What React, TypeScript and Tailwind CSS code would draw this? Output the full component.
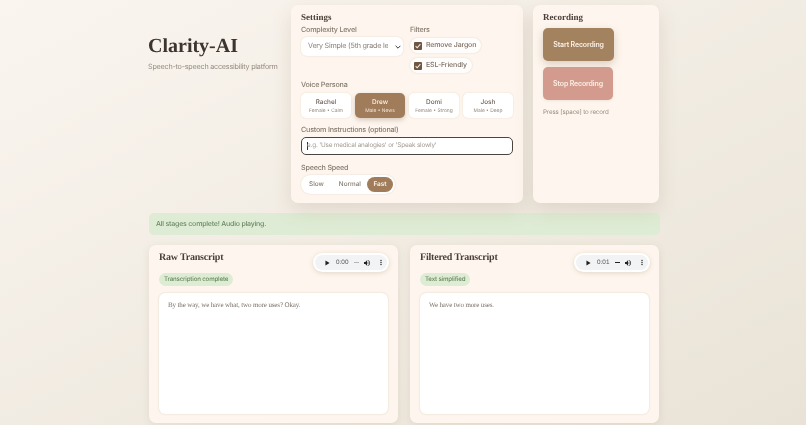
import React from "react";

const sans = "font-['Inter','Noto_Sans',sans-serif] [text-rendering:geometricPrecision]";
const serif = "font-['Liberation_Serif','DejaVu_Serif',serif]";
const label = "text-[7.2px] leading-[10px] tracking-[-0.03em] font-medium text-[#857a6e]";

function Persona({ name, sub, active }: { name: string; sub: string; active?: boolean }) {
  return (
    <div
      className={
        "flex h-[25px] w-[50px] flex-col items-center justify-center rounded-[5px] " +
        (active
          ? "bg-[#a07c5b] text-[#fbf3ea] shadow-[0_2px_5px_rgba(90,60,30,0.25)]"
          : "bg-white text-[#6b6057] shadow-[0_0_2px_rgba(120,90,60,0.18)]")
      }
    >
      <span className="text-[6.4px] leading-[10px] font-medium">{name}</span>
      <span className={"text-[4.9px] leading-[8px] " + (active ? "text-[#f3e6d8]" : "text-[#94887e]")}>{sub}</span>
    </div>
  );
}

function Check({ label }: { label: string }) {
  return (
    <div className="flex h-[15px] w-fit items-center gap-[4px] rounded-full bg-[#fffdfb] pr-[5px] pl-[4px] shadow-[0_0_2px_rgba(120,90,60,0.22)]">
      <span className="flex h-[8px] w-[8px] items-center justify-center rounded-[1px] bg-[#6f5641]">
        <svg viewBox="0 0 8 8" className="h-[8px] w-[8px]">
          <path d="M1.6 4.2 L3.2 5.8 L6.4 2.2" fill="none" stroke="#f6ece0" strokeWidth="1.1" />
        </svg>
      </span>
      <span className="text-[7px] tracking-[-0.02em] font-medium text-[#7a6e64]">{label}</span>
    </div>
  );
}

function Player({ time, bar }: { time: string; bar: string }) {
  return (
    <div className="flex h-[19px] w-[76px] items-center rounded-full bg-white shadow-[0_1px_5px_rgba(110,80,50,0.2)]">
      <div className="mx-[2px] flex h-[15px] w-[72px] items-center rounded-full bg-[#f1f3f4] pl-[10px] text-[#222]">
        <svg viewBox="0 0 6 6" className="h-[6px] w-[5px] fill-current">
          <path d="M0.5 0 L5.5 3 L0.5 6 Z" />
        </svg>
        <span className="ml-[6px] w-[14px] font-['Liberation_Sans',sans-serif] text-[6.4px] text-[#555]">{time}</span>
        <span className={"ml-[4px] h-[1.5px] w-[5px] " + bar} />
        <svg viewBox="0 0 24 24" className="ml-[4px] h-[8px] w-[8px] fill-current">
          <path d="M3 9v6h4l5 5V4L7 9H3zm13.5 3A4.5 4.5 0 0 0 14 8v8a4.5 4.5 0 0 0 2.5-4zM14 3.2v2.1a7 7 0 0 1 0 13.4v2.1a9 9 0 0 0 0-17.6z" />
        </svg>
        <svg viewBox="0 0 4 12" className="ml-[9px] h-[7px] w-[2px] fill-current">
          <circle cx="2" cy="2" r="1.4" />
          <circle cx="2" cy="6" r="1.4" />
          <circle cx="2" cy="10" r="1.4" />
        </svg>
      </div>
    </div>
  );
}

function Transcript({ title, badge, text, time, bar }: { title: string; badge: string; text: string; time: string; bar: string }) {
  return (
    <section className="h-[178px] w-[249px] rounded-[7px] bg-[#fef6ee] px-[10px] pt-[5px] shadow-[0_2px_8px_rgba(110,80,50,0.1)]">
      <div className="flex h-[23px] items-start justify-between">
        <h2 className={serif + " pt-[1px] text-[10px] leading-[14px] tracking-[-0.02em] font-bold text-[#4a3f38]"}>{title}</h2>
        <div className="mt-[3px] mr-[-1px]">
          <Player time={time} bar={bar} />
        </div>
      </div>
      <div className="w-fit rounded-full bg-[#deecd3] px-[5px] py-[1.5px] text-[6.2px] leading-[10px] tracking-[-0.03em] font-medium text-[#6a8a63]">{badge}</div>
      <div className={serif + " mt-[7px] h-[121px] rounded-[6px] bg-white px-[9px] py-[7px] text-[7px] leading-[10px] tracking-[-0.02em] text-[#7a716a] shadow-[0_0_2px_rgba(120,90,60,0.25)]"}>{text}</div>
    </section>
  );
}

export default function App() {
  return (
    <div className={sans + " h-[425px] w-[806px] overflow-hidden bg-gradient-to-br from-[#faf5ef] to-[#e9e3d7] blur-[0.35px]"}>
      <div className="ml-[148px] w-[512px] pt-[5px]">
        <div className="flex">
          <header className="w-[143px] pt-[29px]">
            <h1 className={serif + " text-[20px] leading-[24px] font-bold text-[#3d3430]"}>Clarity-AI</h1>
            <p className="mt-[4px] text-[7.2px] leading-[10px] tracking-[-0.03em] whitespace-nowrap text-[#958b81]">Speech-to-speech accessibility platform</p>
          </header>

          <section className="h-[198px] w-[232px] rounded-[7px] bg-[#fef6ee] px-[10px] pt-[7px] shadow-[0_8px_20px_rgba(110,80,50,0.13)]">
            <h2 className={serif + " text-[9px] leading-[10px] font-bold text-[#4a3f38]"}>Settings</h2>
            <div className="mt-[3px] flex">
              <div className="w-[109px]">
                <div className={label}>Complexity Level</div>
                <div className="mt-[2px] flex h-[19px] w-[102px] items-center justify-between rounded-[6px] bg-white pr-[2px] pl-[7px] shadow-[0_0_2px_rgba(120,90,60,0.2)]">
                  <span className="w-[80px] overflow-hidden text-[7.2px] tracking-[-0.03em] whitespace-nowrap text-[#8a8077]">Very Simple (5th grade level)</span>
                  <svg viewBox="0 0 10 6" className="h-[4px] w-[6px]">
                    <path d="M1 1 L5 5 L9 1" fill="none" stroke="#333" strokeWidth="1.6" />
                  </svg>
                </div>
              </div>
              <div>
                <div className={label}>Filters</div>
                <div className="mt-[3px] flex flex-col gap-[5px]">
                  <Check label="Remove Jargon" />
                  <Check label="ESL-Friendly" />
                </div>
              </div>
            </div>
            <div className={"mt-[7px] " + label}>Voice Persona</div>
            <div className="mt-[3px] flex gap-[4px]">
              <Persona name="Rachel" sub="Female • Calm" />
              <Persona name="Drew" sub="Male • News" active />
              <Persona name="Domi" sub="Female • Strong" />
              <Persona name="Josh" sub="Male • Deep" />
            </div>
            <div className={"mt-[7px] " + label}>Custom Instructions (optional)</div>
            <div className="mt-[2px] flex h-[18px] w-[212px] items-center rounded-[5px] border-[1.5px] border-[#4a4540] bg-white pl-[5px] text-[6.4px] tracking-[-0.03em] text-[#a39b93]">
              <span className="mr-[-1px] h-[8px] w-px bg-[#333]" />
              e.g. 'Use medical analogies' or 'Speak slowly'
            </div>
            <div className={"mt-[8px] " + label}>Speech Speed</div>
            <div className="mt-[2px] flex h-[19px] w-[94px] items-center rounded-full bg-white pr-[2px] pl-[8px] text-[6.4px] font-medium text-[#857a6e] shadow-[0_0_2px_rgba(120,90,60,0.2)]">
              <span>Slow</span>
              <span className="ml-[15px]">Normal</span>
              <span className="ml-auto rounded-full bg-[#a07c5b] px-[6.5px] py-[2.5px] font-semibold text-[#fbf3ea]">Fast</span>
            </div>
          </section>

          <section className="ml-[10px] h-[198px] w-[126px] rounded-[7px] bg-[#fef6ee] px-[10px] pt-[7px] shadow-[0_8px_20px_rgba(110,80,50,0.13)]">
            <h2 className={serif + " text-[9px] leading-[10px] font-bold text-[#4a3f38]"}>Recording</h2>
            <button className="mt-[6px] block h-[33px] w-[71px] rounded-[5px] bg-[#a38260] pt-[1px] text-[7px] tracking-[-0.02em] font-semibold text-[#fbf0e4] shadow-[0_3px_8px_rgba(90,60,30,0.22)]">Start Recording</button>
            <button className="mt-[6px] block h-[33px] w-[70px] rounded-[5px] bg-[#d29b8e] pt-[1px] text-[7px] tracking-[-0.02em] font-semibold text-[#fbefe6] shadow-[0_1px_3px_rgba(90,60,30,0.1)]">Stop Recording</button>
            <p className="mt-[6px] pt-[1.5px] text-[6.2px] leading-[10px] tracking-[-0.02em] text-[#958b81]">Press [space] to record</p>
          </section>
        </div>

        <div className="mt-[10px] ml-[1px] flex h-[22px] items-center rounded-[5px] bg-[#dfecd5] px-[7px] text-[7px] tracking-[-0.03em] font-medium text-[#6a8a63]">All stages complete! Audio playing.</div>

        <div className="mt-[10px] ml-[1px] flex gap-[12px]">
          <Transcript title="Raw Transcript" badge="Transcription complete" text="By the way, we have what, two more uses? Okay." time="0:00" bar="bg-[#b5b5b5]" />
          <Transcript title="Filtered Transcript" badge="Text simplified" text="We have two more uses." time="0:01" bar="bg-[#222]" />
        </div>
      </div>
    </div>
  );
}
